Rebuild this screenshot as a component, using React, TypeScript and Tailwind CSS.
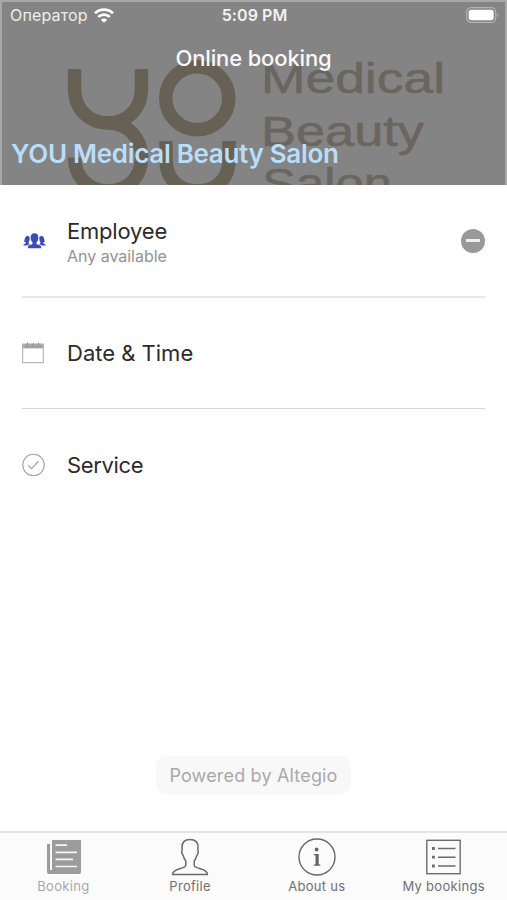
import type { ReactNode } from "react";

function BrandLogo() {
  return (
    <svg className="absolute inset-0" width="507" height="185" viewBox="0 0 507 185" aria-hidden="true">
      <g fill="none" stroke="#666055" strokeWidth="13.500">
        <path d="M74.500 69V89C74.500 109 89 123 108 123S141.500 109 141.500 89V69" />
        <path d="M108 123C128 123 141.500 138 141.500 157.500C141.500 178 127 191 108 191S74.500 177 74.500 157.500" />
        <circle cx="197.300" cy="98.300" r="31.500" />
        <path d="M166 141V160C166 179 179 191 197.500 191S229 179 229 160V141" />
      </g>
      <g fill="#6a665f" stroke="#6a665f" strokeWidth="0.600" fontFamily="'Liberation Sans', Arial, sans-serif" fontSize="42.500">
        <text x="261" y="92.500" textLength="184" lengthAdjust="spacingAndGlyphs">Medical</text>
        <text x="261" y="145.500" textLength="163" lengthAdjust="spacingAndGlyphs">Beauty</text>
        <text x="262" y="198" textLength="130" lengthAdjust="spacingAndGlyphs">Salon</text>
      </g>
    </svg>
  );
}

function WifiIcon() {
  return (
    <svg width="20" height="15" viewBox="0 0 20 15" fill="none" stroke="#fff" strokeWidth="2.700">
      <path d="M1 5.300A13 13 0 0 1 19 5.300" />
      <path d="M4.200 8.900A8.300 8.300 0 0 1 15.800 8.900" />
      <path d="M10 14.800L6.800 11.700A4.600 4.600 0 0 1 13.200 11.700Z" fill="#fff" stroke="none" />
    </svg>
  );
}

function BatteryIcon() {
  return (
    <svg width="33" height="16" viewBox="0 0 33 16">
      <rect x="0.700" y="0.700" width="29" height="14.600" rx="4.300" fill="none" stroke="#b2b2b2" strokeWidth="1.200" />
      <rect x="2.700" y="2.800" width="25" height="10.400" rx="2.600" fill="#fff" />
      <path d="M31 5.500Q33 8 31 10.500Z" fill="#b5b5b5" />
    </svg>
  );
}

function EmployeesIcon() {
  return (
    <svg className="ml-px" width="23" height="16" viewBox="0 0 24 16" fill="#3b4cb6">
      <path d="M12 0C14.700 0 16 1.700 16 4.300C16 6.700 15.200 8.300 14.100 9.200V11C15 12 18.500 12 18.800 13.600L19 15.500H5L5.200 13.600C5.500 12 9 12 9.900 11V9.200C8.800 8.300 8 6.700 8 4.300C8 1.700 9.300 0 12 0Z" />
      <path d="M4.500 2.700C6 2.500 7 3.200 7 5C7 7 6.500 8.300 5.900 9V10.300C6.500 11 7.300 11 7.600 11.400C6.400 11.800 5 12 4.400 12.700H.3C.3 10.800 2.500 10.900 3 10V9.200C2 9.400 1.500 9.200 1 8.900C2.200 7.400 1.200 3.200 4.500 2.700Z" />
      <path d="M19.500 2.700C18 2.500 17 3.200 17 5C17 7 17.500 8.300 18.100 9V10.300C17.500 11 16.700 11 16.400 11.400C17.600 11.800 19 12 19.600 12.700H23.700C23.700 10.800 21.500 10.900 21 10V9.200C22 9.400 22.500 9.200 23 8.900C21.800 7.400 22.800 3.200 19.500 2.700Z" />
    </svg>
  );
}

function CalendarIcon() {
  return (
    <svg width="22" height="22" viewBox="0 0 22 22">
      <rect x="0.700" y="2" width="20.600" height="18.700" fill="none" stroke="#aaa" strokeWidth="1" />
      <rect x="0.700" y="2" width="20.600" height="4.400" fill="#aaa" />
      <path d="M5.500 .5V3.500M11 1V3.500M16.500 .5V3.500" stroke="#8c8c8c" strokeWidth="1" />
      <path d="M3 4.500H19" stroke="#929292" strokeWidth="1.500" strokeDasharray="1.500 1" />
    </svg>
  );
}

function CheckIcon() {
  return (
    <svg width="24" height="24" viewBox="0 0 24 24" fill="none" stroke="#a5a5a5">
      <circle cx="11.500" cy="12" r="10.700" strokeWidth="1.100" />
      <path d="M6.300 12.400L9.500 15.600L16.500 8.300" strokeWidth="1.300" />
    </svg>
  );
}

function BookingIcon() {
  return (
    <svg className="ml-px" width="36" height="36" viewBox="0 0 36 36">
      <path d="M6 1H35V33Q35 35 33 35H3Q1 35 1 33V5H4V31H6Z" fill="#9c9c9c" />
      <path d="M4.600 5V30.500" stroke="#f5f5f5" strokeWidth="1.200" />
      <path d="M9.500 6.200H21M9.500 13.300H31M9.500 20.400H27M9.500 27.500H31" stroke="#f5f5f5" strokeWidth="1.700" />
    </svg>
  );
}

function ProfileIcon() {
  return (
    <svg width="38" height="38" viewBox="0 0 38 38" fill="none" stroke="#696969" strokeWidth="1.500" strokeLinejoin="round">
      <path d="M19 1.500C24.500 1.500 27.300 4.500 27 9.500L26.800 12C27.800 13 27 16.500 25.700 17.500C25.300 20 24.200 21.800 23.200 23V27.300C23.500 31.500 36 29.500 36.500 36.500H1.500C2 29.500 14.500 31.500 14.800 27.300V23C13.800 21.800 12.700 20 12.300 17.500C11 16.500 10.200 13 11.200 12L11 9.500C10.700 4.500 13.500 1.500 19 1.500Z" />
    </svg>
  );
}

function InfoIcon() {
  return (
    <svg width="38" height="38" viewBox="0 0 38 38">
      <circle cx="19" cy="19" r="18" fill="none" stroke="#696969" strokeWidth="1.400" />
      <circle cx="18.600" cy="11.500" r="1.900" fill="#666" />
      <path d="M15.800 16H20.700V26.200L22.300 26.800V27.700H15.800V26.800L17.500 26.200V17.400L15.800 17Z" fill="#666" />
    </svg>
  );
}

function ListIcon() {
  return (
    <svg width="36" height="36" viewBox="0 0 36 36" fill="none" stroke="#6c6c6c">
      <rect x="0.800" y="1.300" width="33.400" height="33.400" strokeWidth="1.400" />
      <path d="M12 9.500H29.500M12 18.200H29.500M12 27H29.500" strokeWidth="1.500" />
      <path d="M6 9.500H8.800M6 18.200H8.800M6 27H8.800" strokeWidth="2.800" />
    </svg>
  );
}

type RowProps = { icon: ReactNode; title: string; titleClass: string; rowClass: string; subtitle?: string; action?: ReactNode };

function Row({ icon, title, titleClass, rowClass, subtitle, action }: RowProps) {
  return (
    <div className={rowClass}>
      <div className="flex w-[45px] shrink-0 items-center">{icon}</div>
      <div className="flex-1">
        <div className={titleClass}>{title}</div>
        {subtitle && <div className="text-[16px] leading-[22px] tracking-[-0.02px] text-[#929292]">{subtitle}</div>}
      </div>
      {action}
    </div>
  );
}

type TabProps = { icon: ReactNode; label: string; active?: boolean };

function Tab({ icon, label, active }: TabProps) {
  return (
    <button className="flex flex-1 flex-col items-center pt-[5px]">
      <span className="flex h-[38px] items-center">{icon}</span>
      <span className={active ? "text-[13px] leading-5 tracking-[0.3px] whitespace-nowrap text-[#a8a8a8]" : "text-[13px] leading-5 tracking-[0.3px] whitespace-nowrap text-[#707070]"}>{label}</span>
    </button>
  );
}

export default function App() {
  return (
    <div className="flex h-[900px] w-[507px] flex-col overflow-hidden bg-white font-['Inter','Noto_Sans',sans-serif]">
      <header className="relative h-[185px] shrink-0 overflow-hidden border-x-2 border-t-2 border-[#a8a8a8] bg-[#848484]">
        <div className="absolute -top-0.5 -left-0.5"><BrandLogo /></div>
        <div className="relative flex h-[26px] items-center justify-between pr-[6px] pl-2 text-white">
          <div className="flex flex-1 items-center gap-[6px]">
            <span className="text-[16px] leading-5 tracking-[0.15px] text-[#eeeeee]">Оператор</span>
            <WifiIcon />
          </div>
          <span className="text-[16px] leading-5 font-semibold tracking-[0.1px] text-[#f2f2f2]">5:09 PM</span>
          <div className="flex flex-1 justify-end"><BatteryIcon /></div>
        </div>
        <h1 className="relative mt-[15px] text-center text-[22px] leading-[30px] font-medium tracking-[-0.15px] text-[#f8f8f8]">Online booking</h1>
        <h2 className="relative mt-[63px] ml-[9px] text-[26px] leading-9 font-semibold tracking-[-0.3px] whitespace-nowrap text-[#b9def9]">YOU Medical Beauty Salon</h2>
      </header>

      <main className="flex flex-1 flex-col">
        <Row
          rowClass="mx-[22px] flex h-[113px] items-center border-b-2 border-[#e8e8e8]"
          icon={<EmployeesIcon />}
          title="Employee"
          titleClass="pt-[3px] text-[22px] leading-7 tracking-[-0.2px] text-[#2b2b2b]"
          subtitle="Any available"
          action={
            <button className="flex size-6 items-center justify-center rounded-full bg-[#999999]" aria-label="Clear employee">
              <span className="h-[3px] w-3.5 bg-[#f0f0f0]" />
            </button>
          }
        />
        <Row
          rowClass="mx-[22px] flex h-[111px] items-center border-b border-[#d6d6d6]"
          icon={<CalendarIcon />}
          title="Date & Time"
          titleClass="text-[22px] leading-7 text-[#2b2b2b]"
        />
        <Row
          rowClass="mx-[22px] flex h-28 items-center"
          icon={<CheckIcon />}
          title="Service"
          titleClass="text-[22px] leading-7 tracking-[-0.35px] text-[#2b2b2b]"
        />
        <div className="mt-auto mb-[37px] flex h-[38px] w-[195px] items-center justify-center self-center rounded-[10px] bg-[#f8f8f8] text-[18px] tracking-[0.17px] whitespace-nowrap text-[#a9a9a9]">
          Powered by Altegio
        </div>
      </main>

      <nav className="flex h-[69px] shrink-0 border-t-2 border-[#e4e4e4] bg-[#fbfbfb]">
        <Tab active icon={<BookingIcon />} label="Booking" />
        <Tab icon={<ProfileIcon />} label="Profile" />
        <Tab icon={<InfoIcon />} label="About us" />
        <Tab icon={<ListIcon />} label="My bookings" />
      </nav>
    </div>
  );
}
